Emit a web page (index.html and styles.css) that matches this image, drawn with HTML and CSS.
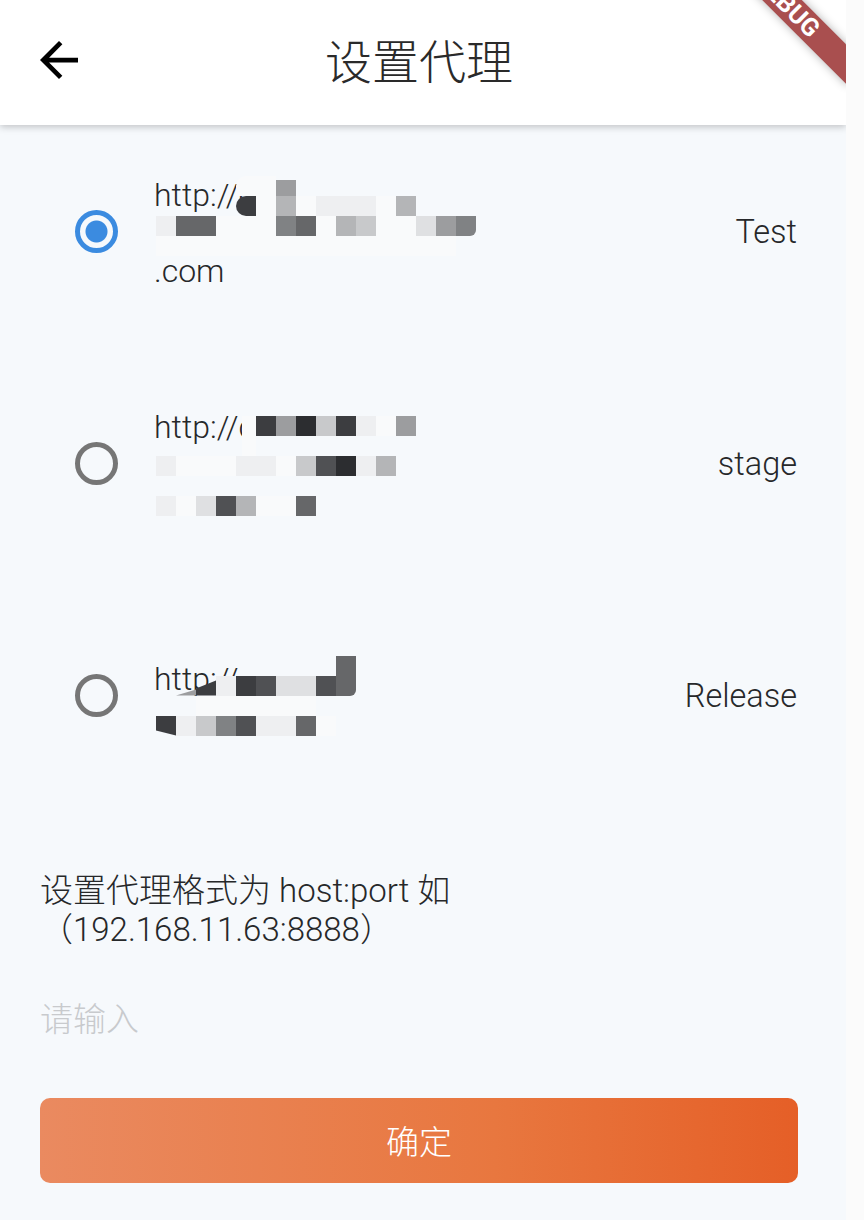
FILE: index.html
```html
<!DOCTYPE html>
<html lang="zh-CN">
<head>
    <meta charset="UTF-8">
    <meta name="viewport" content="width=device-width, initial-scale=1.0">
    <title>设置代理</title>
    <link rel="stylesheet" href="styles.css">
</head>
<body>
<div class="app">

    <!-- Top bar -->
    <header class="topbar">
        <svg class="back-icon" viewBox="4 4 16 16" aria-hidden="true">
            <path d="M20 11H7.83l5.59-5.59L12 4l-8 8 8 8 1.41-1.41L7.83 13H20v-2z"/>
        </svg>
        <h1 class="title">设置代理</h1>
        <div class="debug-clip"><div class="debug-band">DEBUG</div></div>
    </header>

    <!-- Proxy list -->
    <main class="proxy-list">
        <div class="proxy-row">
            <span class="radio radio-on"></span>
            <div class="proxy-url">
                http://c<br>&nbsp;<br>.com
                <div class="mosaic mosaic-a">
                    <i></i><i></i><i></i><i></i><i class="g0 round-t"></i><i class="g0"></i><i class="g5 top-gap"></i><i></i><i></i><i></i><i></i><i></i><i></i><i></i><i></i><i></i>
                    <i></i><i></i><i></i><i></i><i class="g9 round-l"></i><i class="g0"></i><i class="g4"></i><i class="g0"></i><i class="g1"></i><i class="g1"></i><i class="g1"></i><i class="g0"></i><i class="g4"></i><i></i><i></i><i></i>
                    <i class="g1"></i><i class="g7"></i><i class="g7"></i><i class="g0"></i><i class="g0"></i><i class="g0"></i><i class="g6"></i><i class="g7"></i><i class="g0"></i><i class="g4"></i><i class="g3"></i><i class="g0"></i><i class="g0"></i><i class="g2"></i><i class="g5"></i><i class="g6 round-r"></i>
                    <i class="g0"></i><i class="g0"></i><i class="g0"></i><i class="g0"></i><i class="g0"></i><i class="g0"></i><i class="g0"></i><i class="g0"></i><i class="g0"></i><i class="g0"></i><i class="g0"></i><i class="g0"></i><i class="g0"></i><i class="g0"></i><i class="g0"></i><i></i>
                </div>
            </div>
            <span class="proxy-name">Test</span>
        </div>

        <div class="proxy-row">
            <span class="radio"></span>
            <div class="proxy-url">
                http://c<br>&nbsp;<br>&nbsp;
                <div class="mosaic mosaic-b">
                    <i></i><i></i><i></i><i></i><i class="g0 left-gap"></i><i class="g9"></i><i class="g5"></i><i class="g10"></i><i class="g3"></i><i class="g9"></i><i class="g1"></i><i class="g0"></i><i class="g5"></i>
                    <i></i><i></i><i></i><i></i><i class="g0 left-gap"></i><i></i><i></i><i></i><i></i><i></i><i></i><i></i><i></i>
                    <i class="g1"></i><i class="g0"></i><i class="g0"></i><i class="g0"></i><i class="g1"></i><i class="g1"></i><i class="g0"></i><i class="g3"></i><i class="g8"></i><i class="g10"></i><i class="g1"></i><i class="g4"></i><i></i>
                    <i></i><i></i><i></i><i></i><i></i><i></i><i></i><i></i><i></i><i></i><i></i><i></i><i></i>
                    <i class="g1"></i><i class="g0"></i><i class="g2"></i><i class="g8"></i><i class="g4"></i><i class="g0"></i><i class="g0"></i><i class="g7"></i><i></i><i></i><i></i><i></i><i></i>
                </div>
            </div>
            <span class="proxy-name">stage</span>
        </div>

        <div class="proxy-row">
            <span class="radio"></span>
            <div class="proxy-url proxy-url-short">
                http://<br>&nbsp;
                <div class="mosaic mosaic-c">
                    <i></i><i></i><i></i><i></i><i></i><i></i><i></i><i></i><i></i><i class="g7"></i>
                    <i></i><i class="g5 cut-l"></i><i class="g9 cut-m"></i><i class="g1"></i><i class="g9"></i><i class="g8"></i><i class="g2"></i><i class="g2"></i><i class="g8"></i><i class="g7 round-r"></i>
                    <i></i><i></i><i class="g0"></i><i class="g0"></i><i class="g0"></i><i class="g0"></i><i class="g0"></i><i class="g0"></i><i></i><i></i>
                    <i class="g9 cut-b"></i><i class="g1"></i><i class="g3"></i><i class="g6"></i><i class="g8"></i><i class="g1"></i><i class="g1"></i><i class="g7"></i><i class="g0"></i><i></i>
                </div>
            </div>
            <span class="proxy-name">Release</span>
        </div>
    </main>

    <!-- Custom proxy form -->
    <section class="proxy-form">
        <p class="hint">设置代理格式为 host:port 如（192.168.11.63:8888）</p>
        <input class="proxy-input" type="text" placeholder="请输入">
        <button class="submit-btn" type="button">确定</button>
    </section>
</div>
</body>
</html>
```

FILE: styles.css
```css
/* General Page Styles */
body {
    margin: 0;
    background: #fbfbfb;
    color: #26282a;
    font-family: "Roboto", "Noto Sans CJK SC", sans-serif;
}

.app {
    width: 846px;
    height: 1220px;
    display: flex;
    flex-direction: column;
    background: #f6f9fc;
    overflow: hidden;
}

/* Top bar */
.topbar {
    position: relative;
    height: 125px;
    flex: none;
    display: grid;
    grid-template-columns: 1fr auto 1fr;
    align-items: center;
    padding: 0 48px 0 40px;
    background: #ffffff;
    box-shadow: 0 2px 7px rgba(0, 0, 0, 0.22);
}

.back-icon {
    width: 38px;
    height: 38px;
    margin-bottom: 6px;
    fill: #000000;
}

.title {
    margin: 0;
    font-size: 47px;
    font-weight: 300;
    line-height: 1;
    color: #2a2a2a;
}

/* Debug ribbon */
.debug-clip {
    position: absolute;
    top: 0;
    right: 0;
    width: 146px;
    height: 125px;
    overflow: hidden;
}

.debug-band {
    position: absolute;
    left: -13px;
    top: -9px;
    width: 200px;
    height: 28px;
    line-height: 28px;
    text-align: center;
    transform: rotate(45deg);
    background: #a94f4f;
    box-shadow: 0 0 10px rgba(0, 0, 0, 0.3);
    color: #ffffff;
    font-size: 25px;
    font-weight: 700;
}

/* Proxy rows */
.proxy-list {
    display: flex;
    flex-direction: column;
    gap: 112px;
    padding: 46px 49px 0 75px;
}

.proxy-row {
    height: 120px;
    display: flex;
    align-items: center;
}

.radio {
    flex: none;
    box-sizing: border-box;
    width: 43px;
    height: 43px;
    margin-right: 36px;
    border: 5px solid #767676;
    border-radius: 50%;
}

.radio-on {
    border-color: #3b8be0;
    background: radial-gradient(circle, #3b8be0 10.5px, transparent 11.5px);
}

.proxy-url {
    position: relative;
    flex: 1;
    margin-top: 4px;
    font-size: 32px;
    font-weight: 300;
    line-height: 38px;
}

/* Pixelated cover over the hidden part of the address */
.mosaic {
    position: absolute;
    left: 2px;
    display: grid;
    grid-template-columns: repeat(16, 20px);
    grid-auto-rows: 20px;
}

.mosaic-a {
    top: 0;
}

.mosaic-b {
    top: 8px;
    grid-template-columns: repeat(13, 20px);
}

.mosaic-c {
    top: -4px;
    grid-template-columns: repeat(10, 20px);
}

.proxy-url-short {
    margin-top: 5px;
}

.g0 { background: #f9fafb; }
.g1 { background: #eeeff1; }
.g2 { background: #dfe0e2; }
.g3 { background: #c8c9cb; }
.g4 { background: #b4b5b7; }
.g5 { background: #9c9d9f; }
.g6 { background: #808284; }
.g7 { background: #666769; }
.g8 { background: #505154; }
.g9 { background: #3c3d40; }
.g10 { background: #2c2d30; }

.round-t { border-radius: 10px 0 0 0; }
.round-l { border-radius: 10px 0 0 10px; }
.round-r { border-radius: 0 0 6px 0; }
.top-gap { clip-path: inset(4px 0 0 0); }
.left-gap { clip-path: inset(0 0 0 6px); }
.cut-l { clip-path: polygon(100% 70%, 100% 100%, 0 100%); }
.cut-m { clip-path: polygon(100% 25%, 100% 100%, 0 100%, 0 65%); }
.cut-b { clip-path: polygon(0 0, 100% 0, 100% 100%, 0 75%); }

.proxy-name {
    flex: none;
    margin-top: 2px;
    font-size: 32.5px;
    font-weight: 300;
}

/* Custom proxy form */
.proxy-form {
    display: flex;
    flex-direction: column;
    padding: 116px 48px 0 40px;
}

.hint {
    width: 440px;
    margin: 0;
    font-size: 33px;
    font-weight: 300;
    line-height: 39px;
}

.proxy-input {
    height: 40px;
    margin-top: 50px;
    padding: 0;
    border: none;
    outline: none;
    background: transparent;
    font-family: inherit;
    font-size: 33px;
}

.proxy-input::placeholder {
    color: #c8cacd;
    font-weight: 300;
}

.submit-btn {
    height: 85px;
    margin-top: 59px;
    padding: 0 0 2px;
    border: none;
    border-radius: 10px;
    background: linear-gradient(to right, #ea8a60, #e8773f 60%, #e55f27);
    color: #ffffff;
    font-family: inherit;
    font-size: 33px;
    font-weight: 300;
    cursor: pointer;
}
```
